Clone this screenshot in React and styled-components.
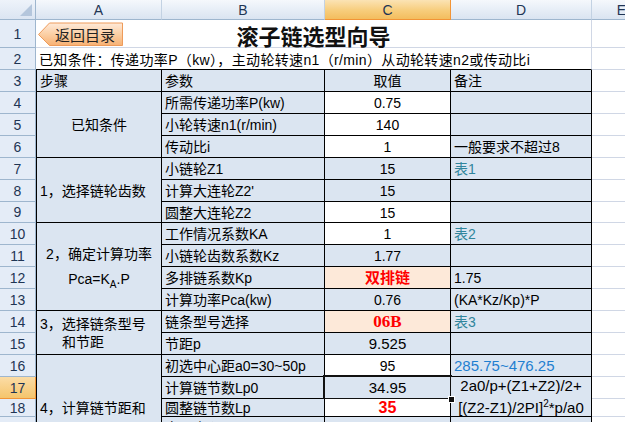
import React from "react"
import styled, { createGlobalStyle, css } from "styled-components"

const GlobalStyle = createGlobalStyle`
  html, body { margin: 0; padding: 0; background: #fff; }
  body { font-family: "Liberation Sans", "Noto Sans CJK SC", sans-serif; }
`

const COLS = "36px 126px 163px 126px 141px 60px"
const ROWS = [20, 28, 22, 22, 22, 22, 22, 22, 22, 21, 22, 22, 22, 22, 22, 22, 22, 22, 18, 22, 22, 22]

const FILLS = {
    blue: "#dbe5f1",
    white: "#ffffff",
    peach: "#fde9d9",
}

const Sheet = styled.div`
    position: relative;
    width: 625px;
    height: 422px;
    overflow: hidden;
    display: grid;
    grid-template-columns: ${COLS};
    grid-template-rows: ${ROWS.map((h) => h + "px").join(" ")};
    font-size: 14px;
    color: #000;
`

const Corner = styled.div`
    grid-column: 1;
    grid-row: 1;
    background: linear-gradient(#eef3fa, #dbe5f2);
    border-right: 1px solid #9eb6ce;
    border-bottom: 1px solid #9eb6ce;
    position: relative;

    &::after {
        content: "";
        position: absolute;
        right: 3px;
        bottom: 3px;
        border-left: 12px solid transparent;
        border-bottom: 12px solid #b4c6dc;
    }
`

const ColHead = styled.div`
    grid-column: ${(p) => p.$col};
    grid-row: 1;
    display: flex;
    align-items: center;
    justify-content: center;
    font-size: 14px;
    color: #1f3554;
    border-right: 1px solid ${(p) => (p.$active ? "#f29436" : "#c3d2e3")};
    border-bottom: 1px solid ${(p) => (p.$active ? "#f29436" : "#9eb6ce")};
    background: ${(p) =>
        p.$active
            ? "linear-gradient(#fbe3b4, #f7cd7c 55%, #f3bd5e)"
            : "linear-gradient(#f5f8fc, #e6edf6 55%, #dae4f1)"};
`

const RowHead = styled.div`
    grid-column: 1;
    grid-row: ${(p) => p.$row};
    display: flex;
    align-items: center;
    justify-content: center;
    font-size: 14px;
    color: #1f3554;
    border-right: 1px solid ${(p) => (p.$active ? "#f29436" : "#9eb6ce")};
    border-bottom: 1px solid ${(p) => (p.$active ? "#f29436" : "#9eb6ce")};
    background: ${(p) =>
        p.$active ? "linear-gradient(#fbdca6, #f5c56c)" : "#e4ecf7"};
`

const Cell = styled.div`
    grid-column: ${(p) => p.$col} / span ${(p) => p.$cs || 1};
    grid-row: ${(p) => p.$row} / span ${(p) => p.$rs || 1};
    position: relative;
    background: ${(p) => FILLS[p.$fill || "blue"]};
    border-right: 1px solid #000;
    border-bottom: 1px solid #000;
    ${(p) => p.$left && css`border-left: 1px solid #000;`}
    display: flex;
    flex-direction: column;
    justify-content: center;
    align-items: ${(p) =>
        p.$align === "center" ? "center" : p.$align === "right" ? "flex-end" : "flex-start"};
    padding: 1px 3px 0;
    white-space: nowrap;
    line-height: ${(p) => p.$lh || 18}px;
    color: ${(p) => p.$color || "#000"};
    font-weight: ${(p) => (p.$bold ? 700 : 400)};
    font-size: ${(p) => p.$size || 14}px;
    ${(p) => p.$serif && css`font-family: "Liberation Serif", "Noto Sans CJK SC", serif;`}
    ${(p) =>
        p.$selected &&
        css`
            &::after {
                content: "";
                position: absolute;
                left: -2px;
                top: -2px;
                right: -2px;
                bottom: -2px;
                border: 2px solid #111;
                pointer-events: none;
            }
            &::before {
                content: "";
                position: absolute;
                right: -5px;
                bottom: -5px;
                width: 5px;
                height: 5px;
                background: #111;
                border: 1px solid #fff;
                z-index: 2;
            }
        `}
`

const Blank = styled.div`
    grid-column: ${(p) => p.$col} / span ${(p) => p.$cs || 1};
    grid-row: ${(p) => p.$row};
    background: #fff;
    border-bottom: 1px solid ${(p) => (p.$edge ? "#000" : "#d0d7e5")};
    border-right: 1px solid #d0d7e5;
    display: flex;
    align-items: center;
    justify-content: ${(p) => (p.$center ? "center" : "flex-start")};
    padding: 0 3px;
    white-space: nowrap;
`

const Title = styled.span`
    font-family: "Noto Sans CJK SC", sans-serif;
    font-weight: 700;
    font-size: 22px;
    color: #111;
    padding-top: 2px;
`

const Note = styled.span`
    font-size: 14px;
    letter-spacing: 0.35px;
`

const Indent = styled.span`
    padding-left: ${(p) => p.$pad || 0}px;
`

const BackButton = styled.div`
    position: absolute;
    left: 37px;
    top: 22px;
    width: 87px;
    height: 25px;
    display: flex;
    align-items: center;
    justify-content: flex-end;

    svg {
        position: absolute;
        left: 0;
        top: 0;
    }
`

const BackLabel = styled.span`
    position: relative;
    font-family: "Noto Sans CJK SC", sans-serif;
    font-size: 15px;
    color: #222;
    padding-right: 9px;
    line-height: 1;
`

const ButtonShape = () => (
    <svg width="87" height="25" viewBox="0 0 87 25">
        <defs>
            <linearGradient id="btnfill" x1="0" y1="0" x2="0" y2="1">
                <stop offset="0" stopColor="#feeada" />
                <stop offset="0.5" stopColor="#fbcfa4" />
                <stop offset="1" stopColor="#f7b173" />
            </linearGradient>
        </defs>
        <path d="M1.5 12.5 L12.5 1 H85.5 V23.5 H12.5 Z" fill="url(#btnfill)" stroke="#ee9b5a" strokeWidth="1" />
    </svg>
)

const Sup = styled.sup`
    font-size: 10px;
    line-height: 0;
`

const Sub = styled.sub`
    font-size: 10px;
    line-height: 0;
`

const A = 2, B = 3, C = 4, D = 5, E = 6
const r = (n) => n + 1

const cells = [
    { row: 3, col: A, text: "步骤" },
    { row: 3, col: B, text: "参数" },
    { row: 3, col: C, text: "取值", align: "center" },
    { row: 3, col: D, text: "备注" },

    { row: 4, col: A, rs: 3, text: "已知条件", align: "center" },
    { row: 4, col: B, text: "所需传递功率P(kw)" },
    { row: 4, col: C, text: "0.75", align: "center", fill: "white" },
    { row: 4, col: D, text: "" },
    { row: 5, col: B, text: "小轮转速n1(r/min)" },
    { row: 5, col: C, text: "140", align: "center", fill: "white" },
    { row: 5, col: D, text: "" },
    { row: 6, col: B, text: "传动比i" },
    { row: 6, col: C, text: "1", align: "center", fill: "white" },
    { row: 6, col: D, text: "一般要求不超过8" },

    { row: 7, col: A, rs: 3, text: "1，选择链轮齿数" },
    { row: 7, col: B, text: "小链轮Z1" },
    { row: 7, col: C, text: "15", align: "center" },
    { row: 7, col: D, text: "表1", color: "#31859c" },
    { row: 8, col: B, text: "计算大连轮Z2'" },
    { row: 8, col: C, text: "15", align: "center" },
    { row: 8, col: D, text: "" },
    { row: 9, col: B, text: "圆整大连轮Z2" },
    { row: 9, col: C, text: "15", align: "center", fill: "white" },
    { row: 9, col: D, text: "" },

    {
        row: 10, col: A, rs: 4, align: "center", lh: 25,
        text: [<span key="1">2，确定计算功率</span>, <span key="2">Pca=K<Sub>A</Sub>.P</span>],
    },
    { row: 10, col: B, text: "工作情况系数KA" },
    { row: 10, col: C, text: "1", align: "center", fill: "white" },
    { row: 10, col: D, text: "表2", color: "#31859c" },
    { row: 11, col: B, text: "小链轮齿数系数Kz" },
    { row: 11, col: C, text: "1.77", align: "center" },
    { row: 11, col: D, text: "" },
    { row: 12, col: B, text: "多排链系数Kp" },
    { row: 12, col: C, text: "双排链", align: "center", fill: "peach", color: "#ff0000", bold: true, size: 15 },
    { row: 12, col: D, text: "1.75" },
    { row: 13, col: B, text: "计算功率Pca(kw)" },
    { row: 13, col: C, text: "0.76", align: "center" },
    { row: 13, col: D, text: "(KA*Kz/Kp)*P" },

    {
        row: 14, col: A, rs: 2,
        text: [<span key="1">3，选择链条型号</span>, <Indent key="2" $pad={22}>和节距</Indent>],
    },
    { row: 14, col: B, text: "链条型号选择" },
    { row: 14, col: C, text: "06B", align: "center", fill: "peach", color: "#ff0000", bold: true, serif: true, size: 17 },
    { row: 14, col: D, text: "表3", color: "#31859c" },
    { row: 15, col: B, text: "节距p" },
    { row: 15, col: C, text: "9.525", align: "center", size: 15 },
    { row: 15, col: D, text: "" },

    {
        row: 16, col: A, rs: 6, lh: 22,
        text: [<span key="1">4，计算链节距和</span>, <Indent key="2" $pad={22}>中心距</Indent>],
    },
    { row: 16, col: B, text: "初选中心距a0=30~50p" },
    { row: 16, col: C, text: "95", align: "center", fill: "white" },
    { row: 16, col: D, text: "285.75~476.25", color: "#1f7fd0", size: 15 },
    { row: 17, col: B, text: "计算链节数Lp0" },
    { row: 17, col: C, text: "34.95", align: "center", selected: true, size: 15 },
    {
        row: 17, col: D, rs: 2, align: "center", lh: 22, size: 15,
        text: [<span key="1">2a0/p+(Z1+Z2)/2+</span>, <span key="2">[(Z2-Z1)/2PI]<Sup>2</Sup>*p/a0</span>],
    },
    { row: 18, col: B, text: "圆整链节数Lp" },
    { row: 18, col: C, text: "35", align: "center", fill: "white", color: "#ff0000", bold: true, size: 16 },
    { row: 19, col: B, text: "实际中心距a(mm)" },
    { row: 19, col: C, text: "95.04", align: "center" },
    { row: 19, col: D, text: "" },
    { row: 20, col: B, text: "" },
    { row: 20, col: C, text: "", align: "center" },
    { row: 20, col: D, text: "" },
]

const App = () => {
    const rowNums = Array.from({ length: 21 }, (_, i) => i + 1)

    return (
        <>
            <GlobalStyle />
            <Sheet>
                <Corner />
                {["A", "B", "C", "D", "E"].map((l, i) => (
                    <ColHead key={l} $col={i + 2} $active={l === "C"}>
                        {l}
                    </ColHead>
                ))}
                {rowNums.map((n) => (
                    <RowHead key={n} $row={r(n)} $active={n === 17}>
                        {n}
                    </RowHead>
                ))}

                <Blank $row={r(1)} $col={A} $cs={4} $center>
                    <Title>滚子链选型向导</Title>
                </Blank>
                <Blank $row={r(2)} $col={A} $cs={4} $edge>
                    <Note>已知条件：传递功率P（kw），主动轮转速n1（r/min）从动轮转速n2或传动比i</Note>
                </Blank>
                {rowNums.map((n) => (
                    <Blank key={"e" + n} $row={r(n)} $col={E} />
                ))}

                {cells.map((c, i) => (
                    <Cell
                        key={i}
                        $row={r(c.row)}
                        $col={c.col}
                        $rs={c.rs}
                        $left={c.col === A}
                        $fill={c.fill}
                        $align={c.align}
                        $color={c.color}
                        $bold={c.bold}
                        $serif={c.serif}
                        $size={c.size}
                        $lh={c.lh}
                        $selected={c.selected}
                    >
                        {c.text}
                    </Cell>
                ))}

                <BackButton>
                    <ButtonShape />
                    <BackLabel>返回目录</BackLabel>
                </BackButton>
            </Sheet>
        </>
    )
}

export default App
